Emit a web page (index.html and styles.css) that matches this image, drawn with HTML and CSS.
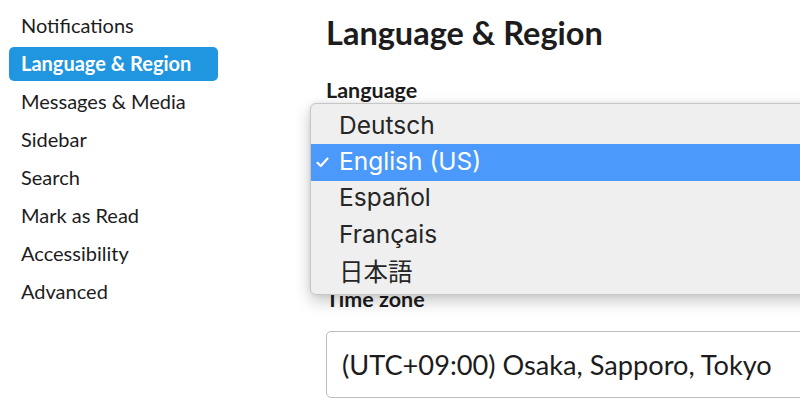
FILE: index.html
```html
<!DOCTYPE html>
<html lang="en">
<head>
<meta charset="utf-8">
<title>Language &amp; Region</title>
<link rel="stylesheet" href="styles.css">
</head>
<body>
<div class="layout">
  <nav class="sidebar">
    <a class="nav-item">Notifications</a>
    <a class="nav-item active">Language &amp; Region</a>
    <a class="nav-item">Messages &amp; Media</a>
    <a class="nav-item">Sidebar</a>
    <a class="nav-item">Search</a>
    <a class="nav-item">Mark as Read</a>
    <a class="nav-item">Accessibility</a>
    <a class="nav-item">Advanced</a>
  </nav>
  <main class="main">
    <h1 class="title">Language &amp; Region</h1>
    <div class="field first">
      <div class="label">Language</div>
      <div class="select"></div>
    </div>
    <div class="field second">
      <div class="label">Time zone</div>
      <div class="select">(UTC+09:00) Osaka, Sapporo, Tokyo</div>
    </div>
    <ul class="menu">
      <li class="menu-item">Deutsch</li>
      <li class="menu-item selected"><svg class="check" width="13" height="11" viewBox="0 0 13 11"><path d="M1.5 5.8 L4.8 9 L11.5 1.5" fill="none" stroke="#fff" stroke-width="2.2" stroke-linecap="round" stroke-linejoin="round"/></svg>English (US)</li>
      <li class="menu-item">Español</li>
      <li class="menu-item">Français</li>
      <li class="menu-item cjk">日本語</li>
    </ul>
  </main>
</div>
</body>
</html>
```
FILE: styles.css
```css
html, body {
  margin: 0;
  padding: 0;
  background: #ffffff;
  overflow: hidden;
}
body {
  width: 800px;
  height: 407px;
  font-family: Lato, "Liberation Sans", sans-serif;
  color: #1d1c1d;
}
.layout {
  display: flex;
  height: 407px;
}
.sidebar {
  width: 209px;
  flex: none;
  padding: 9px 0 0 9px;
  margin-right: 82px;
  display: flex;
  flex-direction: column;
  gap: 4px;
}
.nav-item {
  box-sizing: border-box;
  display: flex;
  align-items: center;
  height: 34px;
  padding: 0 12px 2px 12px;
  border-radius: 5px;
  font-size: 20px;
  color: #1d1c1d;
}
.nav-item.active {
  background: #2196e0;
  color: #ffffff;
  font-weight: 700;
}
.main {
  position: relative;
  flex: 1;
  padding: 0 0 0 26px;
}
.title {
  margin: 15px 0 0 0;
  font-size: 32.5px;
  line-height: 36px;
  font-weight: 700;
  color: #1d1c1d;
}
.field {
  display: flex;
  flex-direction: column;
}
.field.first {
  margin-top: 28px;
}
.field.second {
  margin-top: 112px;
}
.label {
  font-size: 21.5px;
  line-height: 22px;
  font-weight: 700;
  color: #1d1c1d;
  margin-bottom: 21px;
}
.field.first .label {
  margin-bottom: 8px;
}
.select {
  box-sizing: border-box;
  height: 67px;
  width: 520px;
  border: 1px solid #bdbdbd;
  border-radius: 5px;
  padding: 0 15px;
  display: flex;
  align-items: center;
  font-size: 27.2px;
  color: #1d1c1d;
}
.menu {
  position: absolute;
  left: 10px;
  top: 103px;
  width: 540px;
  margin: 0;
  padding: 4px 0 4px 0;
  list-style: none;
  background: #efefef;
  border: 1px solid #c6c6c6;
  border-radius: 6px;
  box-shadow: 0 6px 16px rgba(0, 0, 0, 0.22), 0 0 4px rgba(0, 0, 0, 0.08);
  font-family: Inter, "Noto Sans", sans-serif;
}
.menu-item {
  box-sizing: border-box;
  position: relative;
  height: 36.4px;
  display: flex;
  align-items: center;
  padding: 0 0 3px 28px;
  font-size: 24.5px;
  color: #262626;
}
.menu-item.selected {
  background: #4a99fb;
  color: #ffffff;
}
.check {
  position: absolute;
  left: 5px;
  top: 13px;
}
.cjk {
  font-family: "Noto Sans CJK JP", sans-serif;
}
```
